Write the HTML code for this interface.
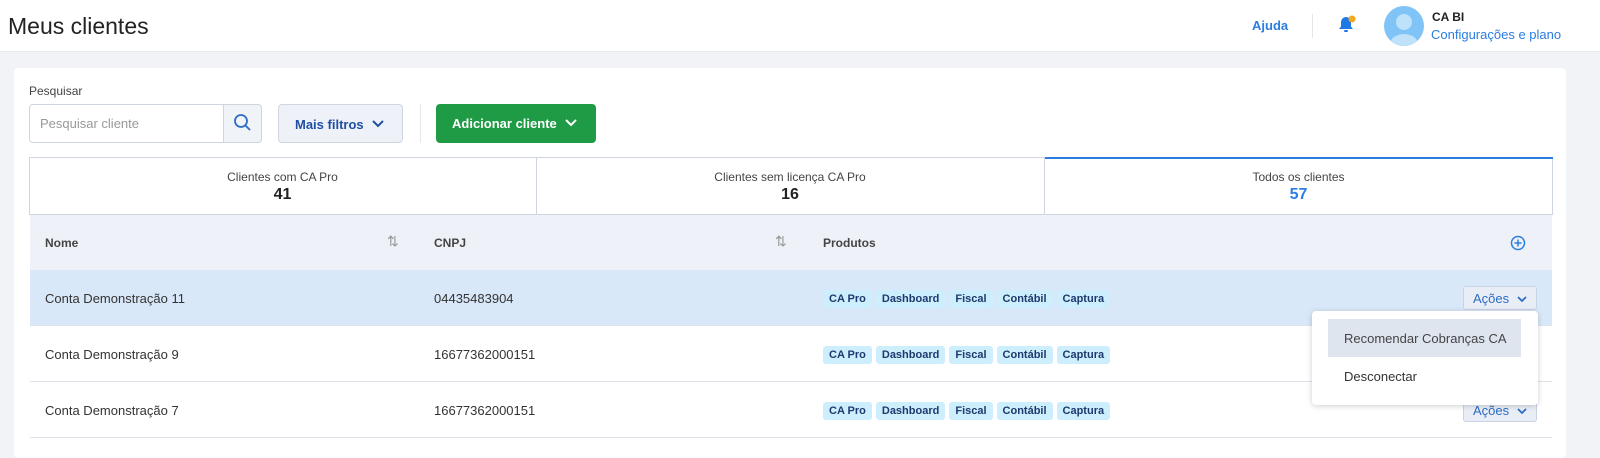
<!DOCTYPE html>
<html><head><meta charset="utf-8"><style>
*{box-sizing:border-box;margin:0;padding:0}
body{width:1600px;height:448px;overflow:hidden;background:#f1f3f7;font-family:"Liberation Sans",sans-serif;color:#333;position:relative}
.hdr{position:absolute;left:0;top:0;width:1600px;height:52px;background:#fff;border-bottom:1px solid #e6e9ee}
.abs{position:absolute}
.card{position:absolute;left:14px;top:68px;width:1552px;height:390px;background:#fff;border-radius:4px}
.tag{display:inline-block;background:#cdeefc;color:#1d3a6e;font-size:11px;font-weight:bold;padding:3px 6px;border-radius:3px;margin-right:4px}
.row{position:absolute;left:30px;width:1522px;height:56px;border-bottom:1px solid #dde2ea;font-size:13px;color:#333}
.row span.c{position:absolute;top:21px}
.acoes{position:absolute;right:15px;top:16px;width:74px;height:24px;border:1px solid #c8d3e3;border-radius:3px;background:#e9eef6;color:#2e6bc6;font-size:13px;padding:4px 0 0 9px}
</style></head><body>
<div class="hdr">
<div class="abs" style="left:8px;top:13px;font-size:23px;color:#222">Meus clientes</div>
<div class="abs" style="left:1252px;top:18px;font-size:13px;color:#2a7de1;font-weight:bold">Ajuda</div>
<div class="abs" style="left:1312px;top:14px;width:1px;height:24px;background:#e4e7ec"></div>
<svg class="abs" style="left:1337px;top:14px" width="22" height="22" viewBox="0 0 22 22"><path d="M9 3c-3 0-5 2.5-5 5.5v4L2 15h14l-2-2.5v-4C14 5.5 12 3 9 3z" fill="#1e78e6"/><rect x="7" y="16" width="4" height="2" rx="1" fill="#1e78e6"/><circle cx="15" cy="5" r="3.5" fill="#f5a623"/></svg>
<div class="abs" style="left:1384px;top:6px;width:40px;height:40px;border-radius:50%;background:#7fc3f7;overflow:hidden"><div class="abs" style="left:12px;top:8px;width:16px;height:16px;border-radius:50%;background:#bfe2fb"></div><div class="abs" style="left:6px;top:28px;width:28px;height:20px;border-radius:50%;background:#bfe2fb"></div></div>
<div class="abs" style="left:1432px;top:10px;font-size:12px;font-weight:bold;color:#222">CA BI</div>
<div class="abs" style="left:1431px;top:27px;font-size:13px;color:#2a7de1">Configurações e plano</div>
</div>
<div class="card">
<div class="abs" style="left:15px;top:16px;font-size:12px;color:#444">Pesquisar</div>
<div class="abs" style="left:15px;top:36px;width:233px;height:39px;border:1px solid #cfd6e0;border-radius:4px;background:#fff"></div>
<div class="abs" style="left:26px;top:48px;font-size:13px;color:#999">Pesquisar cliente</div>
<div class="abs" style="left:209px;top:36px;width:39px;height:39px;border:1px solid #cfd6e0;border-radius:0 4px 4px 0;background:#f0f3f8"></div>
<svg class="abs" style="left:219px;top:45px" width="20" height="20" viewBox="0 0 20 20"><circle cx="8" cy="8" r="6" fill="none" stroke="#2e6bc6" stroke-width="1.8"/><path d="M12.5 12.5l4.5 4.5" stroke="#2e6bc6" stroke-width="1.8"/></svg>
<div class="abs" style="left:264px;top:36px;width:125px;height:39px;border:1px solid #cfd6e0;border-radius:4px;background:#eef2f8;color:#1f4fa3;font-size:13px;font-weight:bold;padding:12px 0 0 16px">Mais filtros <svg width="14" height="10" viewBox="0 0 14 10" style="margin-left:4px"><path d="M2 2l5 5 5-5" fill="none" stroke="#1f4fa3" stroke-width="2"/></svg></div>
<div class="abs" style="left:406px;top:36px;width:1px;height:39px;background:#e4e7ec"></div>
<div class="abs" style="left:422px;top:36px;width:160px;height:39px;border-radius:4px;background:#1f9a45;color:#fff;font-size:13px;font-weight:bold;padding:12px 0 0 16px">Adicionar cliente <svg width="14" height="10" viewBox="0 0 14 10" style="margin-left:4px"><path d="M2 2l5 5 5-5" fill="none" stroke="#fff" stroke-width="2"/></svg></div>
<div class="abs" style="left:15px;top:89px;width:1524px;height:58px;border:1px solid #cfd6e0"></div>
<div class="abs" style="left:522px;top:89px;width:1px;height:58px;background:#cfd6e0"></div>
<div class="abs" style="left:1030px;top:89px;width:1px;height:58px;background:#cfd6e0"></div>
<div class="abs" style="left:1031px;top:89px;width:508px;height:2px;background:#2a7de1"></div>
<div class="abs" style="left:15px;top:102px;width:507px;text-align:center;font-size:12px;color:#444">Clientes com CA Pro<div style="font-size:16px;font-weight:bold;color:#222;margin-top:2px">41</div></div>
<div class="abs" style="left:522px;top:102px;width:508px;text-align:center;font-size:12px;color:#444">Clientes sem licença CA Pro<div style="font-size:16px;font-weight:bold;color:#222;margin-top:2px">16</div></div>
<div class="abs" style="left:1030px;top:102px;width:509px;text-align:center;font-size:12px;color:#444">Todos os clientes<div style="font-size:16px;font-weight:bold;color:#2a7de1;margin-top:2px">57</div></div>
</div>
<div class="abs" style="left:30px;top:215px;width:1522px;height:55px;background:#eef2f8;font-size:12px;font-weight:bold;color:#444">
<span class="abs" style="left:15px;top:21px">Nome</span><span class="abs" style="left:357px;top:18px;color:#999;font-size:14px;font-weight:normal">⇅</span>
<span class="abs" style="left:404px;top:21px">CNPJ</span><span class="abs" style="left:745px;top:18px;color:#999;font-size:14px;font-weight:normal">⇅</span>
<span class="abs" style="left:793px;top:21px">Produtos</span>
<svg class="abs" style="left:1480px;top:20px" width="16" height="16" viewBox="0 0 16 16"><circle cx="8" cy="8" r="6.5" fill="none" stroke="#2a7de1" stroke-width="1.5"/><path d="M8 4.5v7M4.5 8h7" stroke="#2a7de1" stroke-width="1.5"/></svg>
</div>
<div class="row" style="top:270px;background:#d9e8f8"><span class="c" style="left:15px">Conta Demonstração 11</span><span class="c" style="left:404px">04435483904</span><span class="c" style="left:793px;top:20px"><span class="tag">CA Pro</span><span class="tag">Dashboard</span><span class="tag">Fiscal</span><span class="tag">Contábil</span><span class="tag">Captura</span></span><div class="acoes">Ações <svg width="12" height="8" viewBox="0 0 12 8" style="margin-left:3px"><path d="M2 2l4 4 4-4" fill="none" stroke="#2e6bc6" stroke-width="1.8"/></svg></div></div>
<div class="row" style="top:326px;background:#fff"><span class="c" style="left:15px">Conta Demonstração 9</span><span class="c" style="left:404px">16677362000151</span><span class="c" style="left:793px;top:20px"><span class="tag">CA Pro</span><span class="tag">Dashboard</span><span class="tag">Fiscal</span><span class="tag">Contábil</span><span class="tag">Captura</span></span></div>
<div class="row" style="top:382px;background:#fff"><span class="c" style="left:15px">Conta Demonstração 7</span><span class="c" style="left:404px">16677362000151</span><span class="c" style="left:793px;top:20px"><span class="tag">CA Pro</span><span class="tag">Dashboard</span><span class="tag">Fiscal</span><span class="tag">Contábil</span><span class="tag">Captura</span></span><div class="acoes">Ações <svg width="12" height="8" viewBox="0 0 12 8" style="margin-left:3px"><path d="M2 2l4 4 4-4" fill="none" stroke="#2e6bc6" stroke-width="1.8"/></svg></div></div>
<div class="abs" style="left:1312px;top:311px;width:226px;height:94px;background:#fff;border-radius:4px;box-shadow:0 1px 6px rgba(0,0,0,.2)">
<div class="abs" style="left:16px;top:8px;width:193px;height:38px;background:#dfe5ef"></div>
<div class="abs" style="left:32px;top:20px;font-size:13px;color:#444">Recomendar Cobranças CA</div>
<div class="abs" style="left:32px;top:58px;font-size:13px;color:#333">Desconectar</div>
</div>
</body></html>
